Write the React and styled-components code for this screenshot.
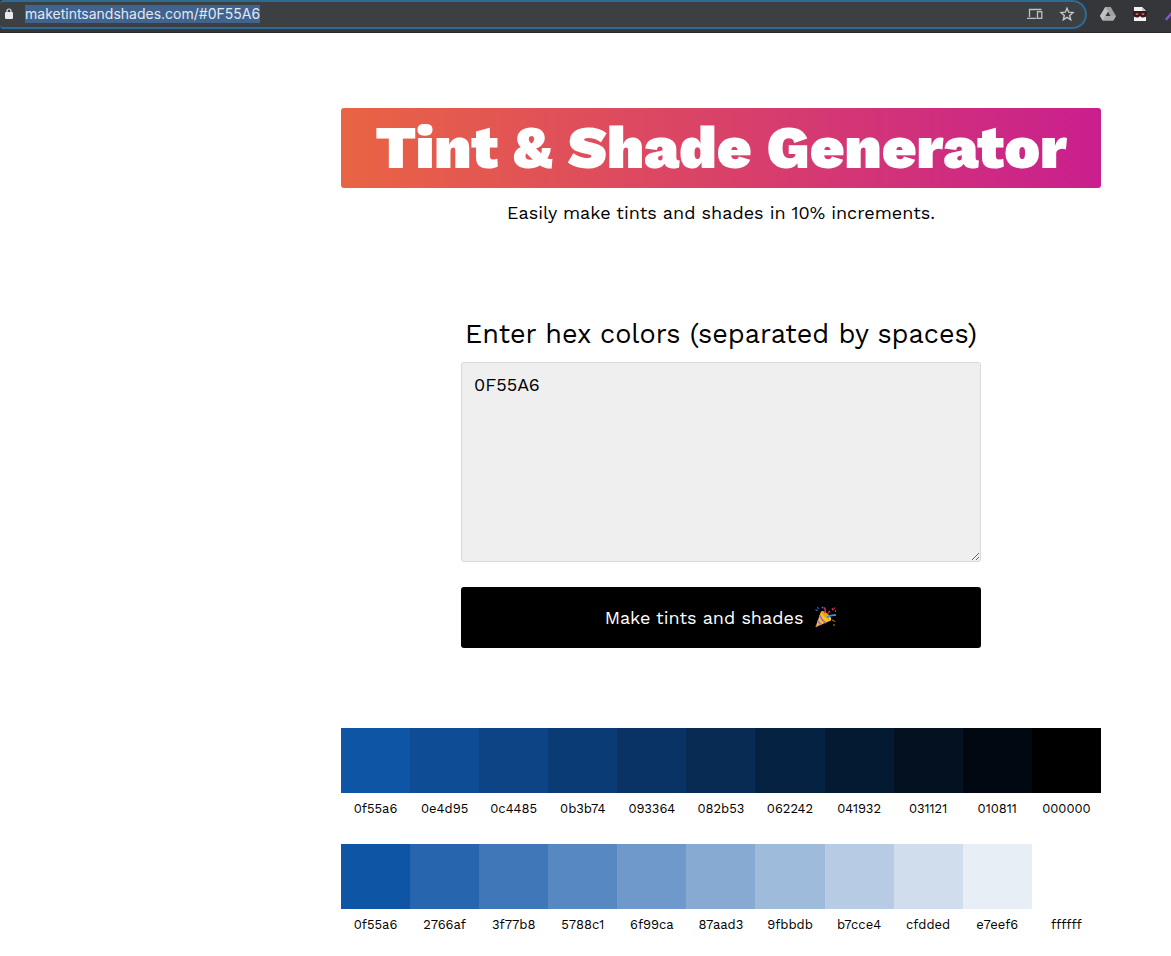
import React, { useState } from "react";
import styled, { createGlobalStyle } from "styled-components";

const GlobalStyle = createGlobalStyle`
  *, *::before, *::after { box-sizing: border-box; }
  body {
    margin: 0;
    background: #fff;
    color: #000;
    font-family: "Work Sans", Inter, "Liberation Sans", sans-serif;
    font-size: 18px;
    line-height: 26px;
  }
`;

const BrowserBar = styled.header`
  display: flex;
  align-items: flex-start;
  height: 33px;
  overflow: hidden;
  background: #35363a;
  border-bottom: 1px solid #28292b;
`;

const AddressBox = styled.div`
  flex: 1;
  display: flex;
  align-items: center;
  height: 29px;
  padding: 0 10px 2px 4px;
  background: #3c4043;
  border: 2px solid #2d6a94;
  border-left: 0;
  border-radius: 4px 15px 15px 4px;
`;

const AddressInput = styled.input`
  width: 235px;
  height: 18px;
  margin: 0 auto 0 11px;
  padding: 0;
  border: 0;
  outline: 0;
  background: #40638f;
  color: #e3e9f1;
  font: 14px/18px Inter, "Liberation Sans", sans-serif;
`;

const IconButton = styled.button`
  display: flex;
  padding: 0;
  margin-left: ${(p) => p.$gap || 0}px;
  border: 0;
  background: none;
  cursor: pointer;
`;

const Extensions = styled.div`
  display: flex;
  flex: none;
  width: 84px;
  padding: 6px 0 0 13px;
  overflow: hidden;
`;

const Page = styled.main`
  max-width: 830px;
  margin-left: auto;
  padding: 75px 70px 20px 0;
`;

const Title = styled.h1`
  margin: 0;
  border-radius: 3px;
  background: linear-gradient(to right, #e96443, #c91f8e);
  color: #fff;
  font-size: 60px;
  font-weight: 900;
  line-height: 80px;
  text-align: center;
  white-space: nowrap;
`;

const Tagline = styled.p`
  margin: 12px 0 0;
  text-align: center;
`;

const Form = styled.form`
  display: flex;
  flex-direction: column;
  max-width: 520px;
  margin: 88px auto 80px;
`;

const Label = styled.label`
  margin-bottom: 8px;
  font-size: 27px;
  line-height: 40px;
  text-align: center;
  white-space: nowrap;
`;

const ColorInput = styled.textarea`
  height: 200px;
  padding: 9px 12px;
  border: 1px solid #d9d9d9;
  border-radius: 3px;
  outline: 0;
  background: #efefef;
  color: #000;
  font: inherit;
  resize: vertical;
`;

const SubmitButton = styled.button`
  display: flex;
  align-items: center;
  justify-content: center;
  gap: 12px;
  height: 61px;
  margin-top: 25px;
  border: 0;
  border-radius: 3px;
  background: #000;
  color: #fff;
  font: inherit;
  cursor: pointer;
`;

const Table = styled.table`
  width: 100%;
  table-layout: fixed;
  border-collapse: collapse;
`;

const Swatch = styled.td`
  height: 65px;
  padding: 0;
  background: ${(p) => p.$color};
`;

const Code = styled.td`
  height: 51px;
  padding: 6px 0 0;
  font-size: 13px;
  line-height: 20px;
  text-align: center;
  vertical-align: top;
`;

const shades = ["0f55a6", "0e4d95", "0c4485", "0b3b74", "093364", "082b53", "062242", "041932", "031121", "010811", "000000"];
const tints = ["0f55a6", "2766af", "3f77b8", "5788c1", "6f99ca", "87aad3", "9fbbdb", "b7cce4", "cfdded", "e7eef6", "ffffff"];

const LockIcon = () => (
  <svg width="10" height="12" viewBox="0 0 10 12" aria-hidden="true">
    <rect x="1" y="4" width="8" height="7" rx="1" fill="#e8eaed" />
    <path d="M3 5V3a2 2 0 0 1 4 0v2" fill="none" stroke="#e8eaed" strokeWidth="1.2" />
  </svg>
);

const DevicesIcon = () => (
  <svg width="16" height="14" viewBox="0 0 16 14" fill="none" stroke="#bdc1c6" strokeWidth="1.3" aria-hidden="true">
    <path d="M14.500 2.500H2.500V10M0 11.300h9.500" />
    <rect x="10.500" y="4.700" width="4.300" height="6.600" />
  </svg>
);

const StarIcon = () => (
  <svg width="16" height="16" viewBox="0 0 16 16" fill="none" stroke="#c4c7cb" strokeWidth="1.4" aria-hidden="true">
    <path d="M8 2.200l1.700 4 4.300.4-3.300 2.800 1 4.300L8 11.400l-3.700 2.300 1-4.300L2 6.600l4.300-.4z" />
  </svg>
);

const DriveIcon = () => (
  <svg width="16" height="16" viewBox="0 0 16 16" aria-hidden="true">
    <path d="M5.300 1h5.400L16 10l-2.700 4.600H2.700L0 10z" fill="#a2a2a2" />
    <path d="M5.300 1L0 10l2.700 4.600L8 5.500z" fill="#c2c2c2" />
    <path d="M5.300 10H16l-2.700 4.600H2.700z" fill="#adadad" />
    <path d="M8 5.800l2.400 4.100H5.600z" fill="#35363a" />
  </svg>
);

const MaskIcon = () => (
  <svg width="16" height="16" viewBox="0 0 16 16" aria-hidden="true">
    <path d="M2 1h8l4 4v10H2z" fill="#f3f3f3" />
    <path d="M10 1v4h4z" fill="#c8c8c8" />
    <path d="M1 5h14v4q-1 2.500-4 2.500-2 0-3-1.500-1 1.500-3 1.500-3 0-4-2.500z" fill="#431418" />
    <path d="M3.500 7.500h3l-.5 1.300H4zM9.500 7.500h3l-.5 1.300h-2z" fill="#b8a3a4" />
  </svg>
);

const PenIcon = () => (
  <svg width="16" height="16" viewBox="0 0 16 16" aria-hidden="true">
    <path d="M2.500 13l9-10" stroke="#8a55dc" strokeWidth="2.500" strokeLinecap="round" />
  </svg>
);

const PartyIcon = () => (
  <svg width="22" height="24" viewBox="0 0 22 24" fill="none" aria-hidden="true">
    <path d="M0.500 21L6 5.500q5 1 10 9z" fill="#f8c51c" />
    <path d="M6 5.500q1.500 5.500 10 9 1-3-3-6.500-4-4-7-2.500z" fill="#e3a915" />
    <path d="M4.800 9q1.500 5 6.200 8M2.800 14.500q1 2.500 3.700 4.500M0.900 19.800l1.500 1" stroke="#a569c9" strokeWidth="1.800" />
    <path d="M12 11.500q3-3 9-2.300" stroke="#3b8eea" strokeWidth="1.800" />
    <path d="M9.500 7q2-2.500-.5-5.500M13 7l2-2" stroke="#d62d59" strokeWidth="1.500" />
    <path d="M17 2l1 2 2-2.500M20.500 4v2" stroke="#c52d5e" strokeWidth="1.200" />
    <path d="M0.500 3.500l2 1.500M2.500 1l1 2" stroke="#2762b5" strokeWidth="1.300" />
    <path d="M17 14l3 1.500M19 18v2" stroke="#a9681d" strokeWidth="1.200" />
    <circle cx="7.500" cy="1.500" r="1" fill="#2f72cf" />
    <circle cx="15" cy="12.500" r="1" fill="#ffe16a" />
  </svg>
);

const Scale = ({ name, colors }) => (
  <Table aria-label={name}>
    <tbody>
      <tr>{colors.map((c) => <Swatch key={c} $color={"#" + c} />)}</tr>
      <tr>{colors.map((c) => <Code key={c}>{c}</Code>)}</tr>
    </tbody>
  </Table>
);

export default function App() {
  const [value, setValue] = useState("0F55A6");
  return (
    <>
      <GlobalStyle />
      <BrowserBar>
        <AddressBox>
          <LockIcon />
          <AddressInput aria-label="Address" defaultValue="maketintsandshades.com/#0F55A6" spellCheck={false} />
          <IconButton type="button" aria-label="Send to your devices"><DevicesIcon /></IconButton>
          <IconButton type="button" aria-label="Bookmark this page" $gap={16}><StarIcon /></IconButton>
        </AddressBox>
        <Extensions>
          <IconButton type="button" aria-label="Drive"><DriveIcon /></IconButton>
          <IconButton type="button" aria-label="Masked page" $gap={16}><MaskIcon /></IconButton>
          <IconButton type="button" aria-label="Color picker" $gap={16}><PenIcon /></IconButton>
        </Extensions>
      </BrowserBar>
      <Page>
        <Title>Tint &amp; Shade Generator</Title>
        <Tagline>Easily make tints and shades in 10% increments.</Tagline>
        <Form onSubmit={(e) => e.preventDefault()}>
          <Label htmlFor="hex-colors">Enter hex colors (separated by spaces)</Label>
          <ColorInput id="hex-colors" spellCheck={false} value={value} onChange={(e) => setValue(e.target.value)} />
          <SubmitButton type="submit">
            Make tints and shades
            <PartyIcon />
          </SubmitButton>
        </Form>
        <Scale name="Shades" colors={shades} />
        <Scale name="Tints" colors={tints} />
      </Page>
    </>
  );
}
